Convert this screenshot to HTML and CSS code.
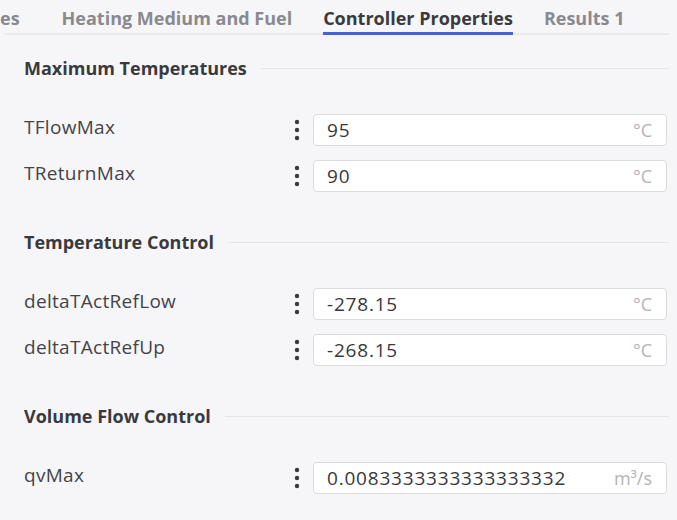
FILE: index.html
```html
<!DOCTYPE html>
<html>
<head>
<meta charset="utf-8">
<link rel="stylesheet" href="styles.css">
</head>
<body>
<div class="tabbar">
  <div class="tab tab-clipped">es</div>
  <div class="tab">Heating Medium and Fuel</div>
  <div class="tab active">Controller Properties</div>
  <div class="tab">Results 1</div>
</div>

<div class="content">
  <section class="section">
    <div class="section-head"><span>Maximum Temperatures</span><div class="rule"></div></div>
    <div class="rows">
      <div class="row">
        <div class="label">TFlowMax</div>
        <div class="kebab"><svg width="6" height="22" viewBox="0 0 6 22"><circle cx="3" cy="3" r="2.2"/><circle cx="3" cy="11" r="2.2"/><circle cx="3" cy="19" r="2.2"/></svg></div>
        <div class="field"><span class="val">95</span><span class="unit">°C</span></div>
      </div>
      <div class="row">
        <div class="label">TReturnMax</div>
        <div class="kebab"><svg width="6" height="22" viewBox="0 0 6 22"><circle cx="3" cy="3" r="2.2"/><circle cx="3" cy="11" r="2.2"/><circle cx="3" cy="19" r="2.2"/></svg></div>
        <div class="field"><span class="val">90</span><span class="unit">°C</span></div>
      </div>
    </div>
  </section>

  <section class="section">
    <div class="section-head"><span>Temperature Control</span><div class="rule"></div></div>
    <div class="rows">
      <div class="row">
        <div class="label">deltaTActRefLow</div>
        <div class="kebab"><svg width="6" height="22" viewBox="0 0 6 22"><circle cx="3" cy="3" r="2.2"/><circle cx="3" cy="11" r="2.2"/><circle cx="3" cy="19" r="2.2"/></svg></div>
        <div class="field"><span class="val">-278.15</span><span class="unit">°C</span></div>
      </div>
      <div class="row">
        <div class="label">deltaTActRefUp</div>
        <div class="kebab"><svg width="6" height="22" viewBox="0 0 6 22"><circle cx="3" cy="3" r="2.2"/><circle cx="3" cy="11" r="2.2"/><circle cx="3" cy="19" r="2.2"/></svg></div>
        <div class="field"><span class="val">-268.15</span><span class="unit">°C</span></div>
      </div>
    </div>
  </section>

  <section class="section">
    <div class="section-head"><span>Volume Flow Control</span><div class="rule"></div></div>
    <div class="rows">
      <div class="row">
        <div class="label">qvMax</div>
        <div class="kebab"><svg width="6" height="22" viewBox="0 0 6 22"><circle cx="3" cy="3" r="2.2"/><circle cx="3" cy="11" r="2.2"/><circle cx="3" cy="19" r="2.2"/></svg></div>
        <div class="field"><span class="val">0.0083333333333333332</span><span class="unit">m³/s</span></div>
      </div>
    </div>
  </section>
</div>
</body>
</html>
```

FILE: styles.css
```css
html, body {
  margin: 0;
  padding: 0;
  background: #f6f6f8;
  font-family: "Open Sans", "Noto Sans", sans-serif;
  color: #3a3a3e;
  width: 677px;
  height: 520px;
  overflow: hidden;
}

.tabbar {
  display: flex;
  height: 33px;
  margin-left: 4px;
  margin-right: 8px;
  border-bottom: 2px solid #ebebed;
  gap: 31px;
}

.tab {
  position: relative;
  height: 33px;
  font-size: 18px;
  font-weight: 700;
  color: #8a8a8e;
  line-height: 36px;
  white-space: nowrap;
}

.tab-clipped {
  margin-left: -4px;
  margin-right: 11px;
}

.tab.active {
  color: #3a3a3e;
}

.tab.active::after {
  content: "";
  position: absolute;
  left: 0;
  right: 0;
  bottom: -2px;
  height: 3px;
  background: #4466cc;
}

.content {
  padding: 21px 10px 0 24px;
  display: flex;
  flex-direction: column;
  gap: 38px;
}

.section-head {
  display: flex;
  align-items: center;
  gap: 14px;
  height: 24px;
  margin-right: -2px;
  font-size: 18px;
  font-weight: 700;
  color: #3a3a3e;
  white-space: nowrap;
}

.rule {
  flex: 1;
  height: 1px;
  background: #e4e4e7;
}

.rows {
  margin-top: 34px;
  display: flex;
  flex-direction: column;
  gap: 14px;
}

.row {
  display: grid;
  grid-template-columns: 1fr 16px 354px;
  column-gap: 8px;
  align-items: center;
  height: 32px;
}

.label {
  font-size: 19px;
  letter-spacing: 0.3px;
  color: #444448;
  margin-top: -6px;
}

.kebab {
  display: flex;
  justify-content: center;
  align-items: center;
}

.kebab svg {
  fill: #3a3a3e;
}

.field {
  box-sizing: border-box;
  height: 32px;
  background: #ffffff;
  border: 1px solid #dcdcde;
  border-radius: 4px;
  display: flex;
  align-items: center;
  justify-content: space-between;
  padding: 0 14px 0 13px;
}

.val {
  font-size: 19px;
  letter-spacing: 0.8px;
  color: #38383c;
}

.unit {
  font-size: 18px;
  color: #b4b4b8;
}
```
